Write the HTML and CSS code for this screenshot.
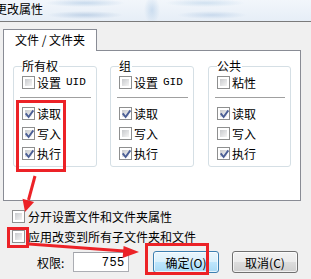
FILE: index.html
```html
<!DOCTYPE html>
<html lang="zh-CN">
<head>
    <meta charset="UTF-8">
    <title>更改属性</title>
    <link rel="stylesheet" href="styles.css">
</head>
<body>
    <div class="titlebar"><span class="title">更改属性</span></div>

    <div class="dialog">
        <div class="tabs"><div class="tab">文件 / 文件夹</div></div>

        <div class="panel">
            <fieldset class="group">
                <legend>所有权</legend>
                <div class="row first"><span class="cb"></span>设置 <span class="mono">UID</span></div>
                <div class="sep"></div>
                <div class="row"><span class="cb"><svg viewBox="0 0 9 9"><path d="M1.3 4.2 L3.6 7 L7.8 1.2"/></svg></span>读取</div>
                <div class="row"><span class="cb"><svg viewBox="0 0 9 9"><path d="M1.3 4.2 L3.6 7 L7.8 1.2"/></svg></span>写入</div>
                <div class="row"><span class="cb"><svg viewBox="0 0 9 9"><path d="M1.3 4.2 L3.6 7 L7.8 1.2"/></svg></span>执行</div>
            </fieldset>

            <fieldset class="group">
                <legend>组</legend>
                <div class="row first"><span class="cb"></span>设置 <span class="mono">GID</span></div>
                <div class="sep"></div>
                <div class="row"><span class="cb"><svg viewBox="0 0 9 9"><path d="M1.3 4.2 L3.6 7 L7.8 1.2"/></svg></span>读取</div>
                <div class="row"><span class="cb"></span>写入</div>
                <div class="row"><span class="cb"><svg viewBox="0 0 9 9"><path d="M1.3 4.2 L3.6 7 L7.8 1.2"/></svg></span>执行</div>
            </fieldset>

            <fieldset class="group">
                <legend>公共</legend>
                <div class="row first"><span class="cb"></span>粘性</div>
                <div class="sep"></div>
                <div class="row"><span class="cb"><svg viewBox="0 0 9 9"><path d="M1.3 4.2 L3.6 7 L7.8 1.2"/></svg></span>读取</div>
                <div class="row"><span class="cb"></span>写入</div>
                <div class="row"><span class="cb"><svg viewBox="0 0 9 9"><path d="M1.3 4.2 L3.6 7 L7.8 1.2"/></svg></span>执行</div>
            </fieldset>
        </div>

        <div class="options">
            <div class="row"><span class="cb"></span>分开设置文件和文件夹属性</div>
            <div class="row"><span class="cb"></span>应用改变到所有子文件夹和文件</div>
        </div>

        <div class="footer">
            <span class="label">权限:</span>
            <div class="field">755</div>
            <button class="btn default">确定(O)</button>
            <button class="btn">取消(C)</button>
        </div>
    </div>

    <!-- red annotations drawn over the dialog -->
    <svg class="marks" viewBox="0 0 311 279">
        <rect x="17.5" y="101.5" width="47" height="69"/>
        <rect x="8.5" y="228.5" width="19" height="18"/>
        <rect x="146.5" y="244.5" width="61" height="29"/>
        <line x1="35" y1="176" x2="28.5" y2="200"/>
        <polygon points="25,212 22.5,198.8 34.1,202.1"/>
        <line x1="29" y1="244" x2="124" y2="251"/>
        <polygon points="139,252 122.6,257.9 123.6,245.9"/>
    </svg>
</body>
</html>
```

FILE: styles.css
```css
* {
    box-sizing: border-box;
}

body {
    margin: 0;
    width: 311px;
    height: 279px;
    overflow: hidden;
    position: relative;
    background: #f0f0f0;
    font-family: "Noto Sans CJK SC", sans-serif;
    font-size: 12px;
    color: #000;
}

.titlebar {
    height: 22px;
    border-bottom: 1px solid #7b7b7b;
    background:
        radial-gradient(ellipse 40px 4px at 85px 3px, rgba(150,185,220,0.45), transparent),
        radial-gradient(ellipse 38px 4px at 85px 15px, rgba(130,165,205,0.4), transparent),
        radial-gradient(ellipse 8px 14px at 152px 10px, rgba(140,180,220,0.35), transparent),
        radial-gradient(ellipse 40px 4px at 205px 3px, rgba(160,195,225,0.4), transparent),
        radial-gradient(ellipse 35px 4px at 212px 15px, rgba(140,175,215,0.35), transparent),
        linear-gradient(to bottom, #f2f6fb, #e6eef7);
    overflow: hidden;
}

.title {
    display: block;
    margin-left: -5px;
    line-height: 17px;
}

.dialog {
    padding: 7px 0 0 3px;
}

.tabs {
    display: flex;
}

.tab {
    position: relative;
    z-index: 1;
    width: 94px;
    height: 22px;
    margin-bottom: -1px;
    border: 1px solid #898c95;
    border-bottom: none;
    background: #fff;
    text-align: center;
    line-height: 20px;
}

.panel {
    width: 298px;
    height: 151px;
    border: 1px solid #898c95;
    background: #fff;
    padding: 8px 0 0 9px;
    display: grid;
    grid-template-columns: 84px 84px 84px;
    column-gap: 13px;
    align-items: start;
}

.group {
    margin: 0;
    min-width: 0;
    border: 1px solid #d5dfe5;
    border-radius: 3px;
    padding: 0 4px 3px 8px;
}

.group:last-child {
    margin-left: 1px;
}

.group legend {
    padding: 0 1px 0 0;
    line-height: 14px;
}

.row {
    display: flex;
    align-items: center;
    gap: 2px;
    height: 20px;
    white-space: nowrap;
}

.row.first {
    height: 18px;
}

.mono {
    font-family: "Liberation Mono", monospace;
    font-size: 11px;
    margin-left: 3px;
}

.sep {
    margin: 6px 1px 4px -2px;
    border-top: 1px solid #a0a0a0;
    border-bottom: 1px solid #fff;
}

.cb {
    flex: none;
    width: 13px;
    height: 13px;
    border: 1px solid #8e8f8f;
    padding: 2px;
    background: linear-gradient(135deg, #c8cacd, #f5f5f5) content-box, #fff;
}

.cb svg {
    display: block;
    width: 9px;
    height: 9px;
    overflow: visible;
}

.cb path {
    fill: none;
    stroke: #4b5f96;
    stroke-width: 1.9;
    stroke-linecap: square;
}

.options {
    margin-top: 5px;
    padding-left: 9px;
}

.options .row {
    gap: 3px;
}

.footer {
    display: flex;
    align-items: center;
    height: 22px;
    margin-top: 5px;
    padding-left: 34px;
}

.label {
    width: 36px;
}

.field {
    width: 56px;
    height: 20px;
    border: 1px solid #abadb3;
    border-top-color: #a0a2a8;
    background: #fff;
    text-align: right;
    padding-right: 3px;
    font-family: "Liberation Sans", sans-serif;
    font-size: 12px;
    letter-spacing: 1px;
    line-height: 18px;
}

.btn {
    width: 66px;
    height: 22px;
    margin-left: 13px;
    padding: 0;
    border: 1px solid #707070;
    border-radius: 3px;
    background: linear-gradient(to bottom, #f2f2f2 0%, #ebebeb 50%, #dddddd 50%, #cfcfcf 100%);
    box-shadow: inset 0 0 0 1px rgba(255,255,255,0.7);
    font-family: inherit;
    font-size: 12px;
    color: #000;
}

.btn.default {
    margin-left: 24px;
    border-color: #3c7fb1;
    background: linear-gradient(to bottom, #eaf6fd 0%, #d9f0fc 50%, #bee6fd 50%, #a7d9f5 100%);
}

.marks {
    position: absolute;
    top: 0;
    left: 0;
    width: 311px;
    height: 279px;
    pointer-events: none;
}

.marks rect,
.marks line {
    fill: none;
    stroke: #ec2227;
    stroke-width: 3;
}

.marks polygon {
    fill: #ec2227;
}
```
